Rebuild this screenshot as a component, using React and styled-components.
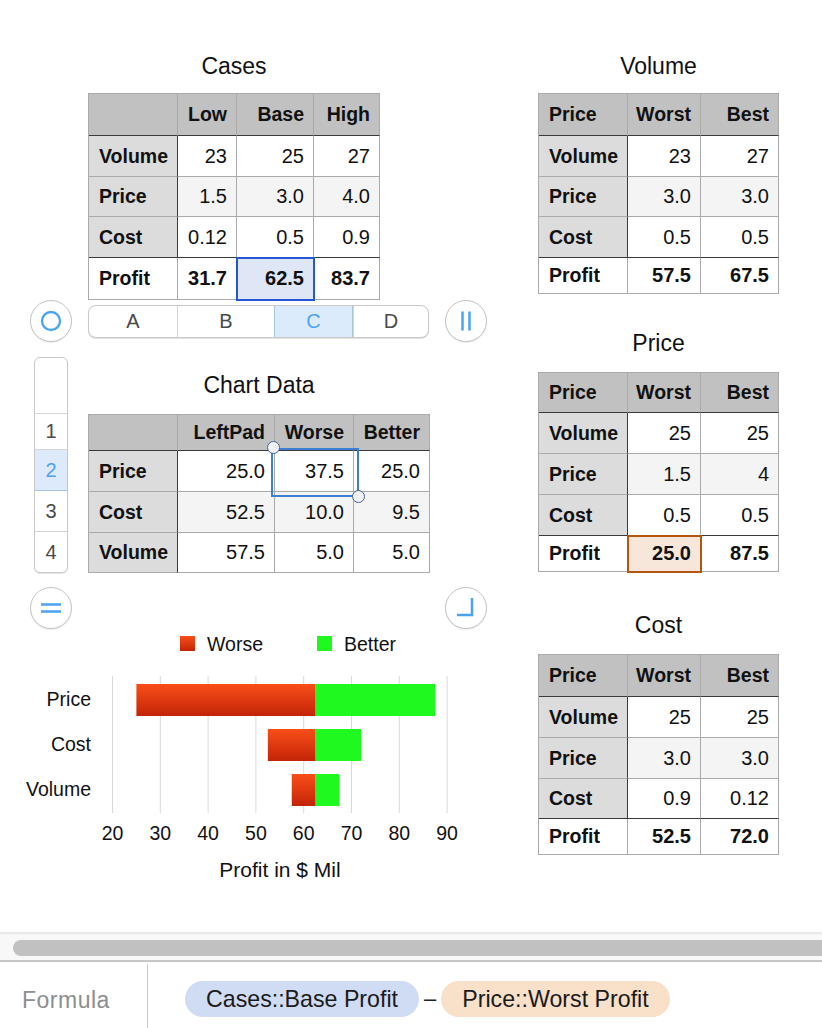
import React from 'react';
import styled, { createGlobalStyle, css } from 'styled-components';

const GlobalStyle = createGlobalStyle`
  html, body { margin: 0; padding: 0; background: #fff; }
  body {
    font-family: "Liberation Sans", Arial, Helvetica, sans-serif;
    color: #111;
  }
`;

const BLUE = '#4aa3f5';

const Page = styled.div`
  width: 822px;
  height: 1028px;
  display: flex;
  flex-direction: column;
  overflow: hidden;
  background: #fff;
`;

const Workspace = styled.div`
  flex: 0 0 932px;
  display: flex;
`;

const LeftPane = styled.div`
  width: 510px;
  flex: 0 0 510px;
  display: flex;
  flex-direction: column;
  padding-top: 52px;
  box-sizing: border-box;
`;

const RightPane = styled.div`
  flex: 1;
  display: flex;
  flex-direction: column;
  padding: 52px 0 0 28px;
`;

const GutterRow = styled.div`
  display: flex;
  align-items: ${p => p.$align || 'center'};
  gap: 16px;
  padding-left: 30px;
  margin-top: ${p => p.$mt || 0}px;
`;

const Gutter = styled.div`
  flex: 0 0 42px;
  width: 42px;
  display: flex;
  justify-content: center;
`;

const Content = styled.div`
  flex: 0 0 341px;
  width: 341px;
  display: flex;
  flex-direction: column;
  align-items: flex-start;
`;

const Block = styled.div`
  display: flex;
  flex-direction: column;
  align-self: flex-start;
  margin-top: ${p => p.$mt || 0}px;
`;

const Title = styled.div`
  font-size: 23px;
  line-height: 28px;
  text-align: center;
  color: #111;
  margin-bottom: ${p => p.$gap || 13}px;
`;

const Grid = styled.div`
  position: relative;
  display: grid;
  grid-template-columns: ${p => p.$cols};
  width: max-content;
  border-top: 1px solid #aaaaaa;
  border-left: 1px solid #aaaaaa;
`;

const selTones = {
  blue: { line: '#2456d6', fill: '#dfe6f6' },
  orange: { line: '#b3560f', fill: '#f7e6da' },
};

const Cell = styled.div`
  box-sizing: border-box;
  height: ${p => p.$h}px;
  display: flex;
  align-items: center;
  justify-content: ${p => (p.$left ? 'flex-start' : 'flex-end')};
  padding: ${p => (p.$left ? '0 0 0 10px' : '0 9px 0 0')};
  border-right: 1px solid ${p => (p.$darkRight ? '#3a3a3a' : '#aaaaaa')};
  border-bottom: 1px solid ${p => (p.$darkBottom ? '#3a3a3a' : '#aaaaaa')};
  background: ${p =>
    p.$kind === 'head'
      ? '#c1c1c1'
      : p.$kind === 'rowhead'
      ? '#dcdcdc'
      : p.$alt
      ? '#f4f4f4'
      : '#ffffff'};
  font-size: ${p => (p.$label ? '19.5px' : '20px')};
  font-weight: ${p => (p.$bold ? 700 : 400)};
  color: #111;
  white-space: nowrap;
  ${p =>
    p.$sel &&
    css`
      position: relative;
      z-index: 1;
      outline: 2px solid ${selTones[p.$sel].line};
      outline-offset: -1px;
      background: ${selTones[p.$sel].fill};
    `}
`;

const SelectionBox = styled.div`
  position: absolute;
  left: ${p => p.$x}px;
  top: ${p => p.$y}px;
  width: ${p => p.$w}px;
  height: ${p => p.$h}px;
  box-sizing: border-box;
  border: 2px solid #3c80d4;
  z-index: 2;
  pointer-events: none;
`;

const Handle = styled.div`
  position: absolute;
  left: ${p => p.$x - 6.5}px;
  top: ${p => p.$y - 6.5}px;
  width: 13px;
  height: 13px;
  box-sizing: border-box;
  border-radius: 50%;
  background: #f1f3f7;
  border: 1.5px solid #4a6394;
  z-index: 3;
`;

function SheetTable({ cols, header, rows, footer, heights, sel, children }) {
  const last = rows.length - 1;
  const isSel = (r, c) => sel && sel.row === r && sel.col === c;
  return (
    <Grid $cols={cols.map(c => `${c}px`).join(' ')}>
      {header.map((h, i) => (
        <Cell
          key={`h${i}`}
          $kind="head"
          $h={heights[0]}
          $left={i === 0}
          $darkBottom
          $bold
          $label
        >
          {h}
        </Cell>
      ))}
      {rows.map((r, ri) =>
        r.map((v, ci) => (
          <Cell
            key={`r${ri}c${ci}`}
            $kind={ci === 0 ? 'rowhead' : 'value'}
            $alt={ri === 1}
            $h={heights[ri + 1]}
            $left={ci === 0}
            $darkRight={ci === 0}
            $darkBottom={!!footer && ri === last}
            $bold={ci === 0}
            $label={ci === 0}
            $sel={isSel(ri, ci) ? sel.tone : undefined}
          >
            {v}
          </Cell>
        ))
      )}
      {footer &&
        footer.map((v, ci) => (
          <Cell
            key={`f${ci}`}
            $kind="foot"
            $h={heights[rows.length + 1]}
            $left={ci === 0}
            $bold
            $label={ci === 0}
            $sel={isSel('footer', ci) ? sel.tone : undefined}
          >
            {v}
          </Cell>
        ))}
      {children}
    </Grid>
  );
}

const CircleButton = styled.div`
  width: 42px;
  height: 42px;
  box-sizing: border-box;
  border-radius: 50%;
  border: 1.5px solid #c4c4c4;
  background: #fff;
  box-shadow: 0 1px 1px rgba(0, 0, 0, 0.08);
  display: flex;
  align-items: center;
  justify-content: center;
  flex: 0 0 42px;
`;

const IconSvg = styled.svg`
  width: 24px;
  height: 24px;
  fill: none;
  stroke: ${BLUE};
  stroke-width: 2.5;
`;

const RingIcon = () => (
  <IconSvg viewBox="0 0 24 24">
    <circle cx="12" cy="12" r="9" strokeWidth="2.3" />
  </IconSvg>
);
const PauseIcon = () => (
  <IconSvg viewBox="0 0 24 24">
    <path d="M8.5 2.5V21.5M15.5 2.5V21.5" />
  </IconSvg>
);
const EqualsIcon = () => (
  <IconSvg viewBox="0 0 24 24">
    <path d="M2 8.5H22M2 15.5H22" />
  </IconSvg>
);
const CornerIcon = () => (
  <IconSvg viewBox="0 0 24 24">
    <path d="M18 2V19H3" />
  </IconSvg>
);

const LetterBar = styled.div`
  display: flex;
  width: 341px;
  height: 33px;
  box-sizing: border-box;
  border: 1px solid #c8c8c8;
  border-radius: 8px;
  overflow: hidden;
  background: #fff;
  box-shadow: 0 1px 1px rgba(0, 0, 0, 0.12);
`;

const LetterSeg = styled.div`
  flex: ${p => (p.$w ? `0 0 ${p.$w}px` : '1')};
  box-sizing: border-box;
  display: flex;
  align-items: center;
  justify-content: center;
  font-size: 20px;
  color: ${p => (p.$active ? BLUE : '#4a4a4a')};
  background: ${p => (p.$active ? '#dcebfc' : 'transparent')};
  border-left: 1px solid ${p => (p.$active ? '#a9c4e2' : '#d4d4d4')};
  border-right: ${p => (p.$active ? '1px solid #a9c4e2' : 'none')};
  &:first-child {
    border-left: none;
  }
`;

const RowRail = styled.div`
  width: 34px;
  box-sizing: border-box;
  border: 1px solid #c9c9c9;
  border-radius: 6px;
  overflow: hidden;
  background: #fff;
  display: flex;
  flex-direction: column;
  box-shadow: 0 1px 1px rgba(0, 0, 0, 0.1);
`;

const RailCell = styled.div`
  height: ${p => p.$h}px;
  box-sizing: border-box;
  border-bottom: 1px solid ${p => (p.$active ? '#a9c4e2' : '#d6d6d6')};
  display: flex;
  align-items: center;
  justify-content: center;
  font-size: 20px;
  color: ${p => (p.$active ? BLUE : '#4a4a4a')};
  background: ${p => (p.$active ? '#dceafb' : 'transparent')};
  &:last-child {
    border-bottom: none;
  }
`;

const ChartSvg = styled.svg`
  display: block;
  text {
    font-family: "Liberation Sans", Arial, Helvetica, sans-serif;
    font-size: 19.5px;
    fill: #111;
  }
  .axis-title {
    font-size: 21px;
  }
`;

const ScrollTrack = styled.div`
  flex: 0 0 30px;
  box-sizing: border-box;
  border-top: 2px solid #e8e8e8;
  border-bottom: 2px solid #c8c8c8;
  background: #f8f8f8;
  padding: 6px 0 0 13px;
`;

const ScrollThumb = styled.div`
  height: 16px;
  background: #c1c1c1;
  border-radius: 8px 0 0 8px;
`;

const FormulaBar = styled.div`
  flex: 1;
  display: flex;
  background: #fff;
`;

const FormulaLabel = styled.div`
  flex: 0 0 148px;
  box-sizing: border-box;
  border-right: 1px solid #c8c8c8;
  display: flex;
  align-items: center;
  padding: 9px 0 0 22px;
  font-size: 23px;
  letter-spacing: 0.5px;
  color: #8e8e8e;
  margin-top: 2px;
`;

const FormulaBody = styled.div`
  flex: 1;
  display: flex;
  align-items: center;
  padding: 8px 0 0 37px;
`;

const Pill = styled.span`
  height: 36px;
  display: inline-flex;
  align-items: center;
  padding: 0 21px;
  border-radius: 18px;
  font-size: 23.2px;
  color: #1a1a1a;
  background: ${p => (p.$tone === 'orange' ? '#f8e0c9' : '#d0dcf3')};
`;

const Operator = styled.span`
  font-size: 22px;
  color: #222;
  padding: 0 5px;
`;

const casesData = {
  cols: [89, 59, 77, 66],
  header: ['', 'Low', 'Base', 'High'],
  rows: [
    ['Volume', '23', '25', '27'],
    ['Price', '1.5', '3.0', '4.0'],
    ['Cost', '0.12', '0.5', '0.9'],
  ],
  footer: ['Profit', '31.7', '62.5', '83.7'],
  heights: [42, 41, 40, 41, 42],
  sel: { row: 'footer', col: 2, tone: 'blue' },
};

const chartData = {
  cols: [89, 97, 79, 76],
  header: ['', 'LeftPad', 'Worse', 'Better'],
  rows: [
    ['Price', '25.0', '37.5', '25.0'],
    ['Cost', '52.5', '10.0', '9.5'],
    ['Volume', '57.5', '5.0', '5.0'],
  ],
  heights: [36, 41, 41, 40],
};

const sideTables = [
  {
    title: 'Volume',
    mt: 0,
    rows: [
      ['Volume', '23', '27'],
      ['Price', '3.0', '3.0'],
      ['Cost', '0.5', '0.5'],
    ],
    footer: ['Profit', '57.5', '67.5'],
    heights: [42, 41, 40, 41, 36],
    gap: 13,
  },
  {
    title: 'Price',
    mt: 35,
    rows: [
      ['Volume', '25', '25'],
      ['Price', '1.5', '4'],
      ['Cost', '0.5', '0.5'],
    ],
    footer: ['Profit', '25.0', '87.5'],
    heights: [40, 41, 41, 41, 36],
    gap: 15,
    sel: { row: 'footer', col: 1, tone: 'orange' },
  },
  {
    title: 'Cost',
    mt: 39,
    rows: [
      ['Volume', '25', '25'],
      ['Price', '3.0', '3.0'],
      ['Cost', '0.9', '0.12'],
    ],
    footer: ['Profit', '52.5', '72.0'],
    heights: [42, 41, 41, 40, 36],
    gap: 15,
  },
];

const xOf = v => 112.5 + (v - 20) * 4.78;
const ticks = [20, 30, 40, 50, 60, 70, 80, 90];
const bars = [
  { label: 'Price', y: 683, lo: 25, hi: 87.5 },
  { label: 'Cost', y: 728, lo: 52.5, hi: 72 },
  { label: 'Volume', y: 773, lo: 57.5, hi: 67.5 },
];
const BASE = 62.5;

function TornadoChart() {
  return (
    <ChartSvg width="480" height="257" viewBox="0 628 480 257">
      <defs>
        <linearGradient id="worseGrad" x1="0" y1="0" x2="0" y2="1">
          <stop offset="0" stopColor="#f94e19" />
          <stop offset="1" stopColor="#c32407" />
        </linearGradient>
      </defs>
      <rect x="180" y="635" width="15" height="15" fill="url(#worseGrad)" />
      <text x="207" y="650">Worse</text>
      <rect x="317" y="635" width="15" height="15" fill="#1ff91f" />
      <text x="344" y="650">Better</text>

      {ticks.map(t => (
        <line
          key={t}
          x1={xOf(t)}
          x2={xOf(t)}
          y1="675"
          y2="812"
          stroke="#d9d9d9"
          strokeWidth="1"
        />
      ))}
      {bars.map(b => (
        <g key={b.label}>
          <rect
            x={xOf(b.lo)}
            y={b.y}
            width={xOf(BASE) - xOf(b.lo)}
            height="32"
            fill="url(#worseGrad)"
          />
          <rect
            x={xOf(BASE)}
            y={b.y}
            width={xOf(b.hi) - xOf(BASE)}
            height="32"
            fill="#1ff91f"
          />
          <text x="91" y={b.y + 22} textAnchor="end">
            {b.label}
          </text>
        </g>
      ))}
      {ticks.map(t => (
        <text key={`l${t}`} x={xOf(t)} y="839" textAnchor="middle">
          {t}
        </text>
      ))}
      <text className="axis-title" x="280" y="876" textAnchor="middle">
        Profit in $ Mil
      </text>
    </ChartSvg>
  );
}

export default function App() {
  return (
    <Page>
      <GlobalStyle />
      <Workspace>
        <LeftPane>
          <GutterRow $align="flex-start">
            <Gutter />
            <Content>
              <Block>
                <Title>Cases</Title>
                <SheetTable {...casesData} />
              </Block>
            </Content>
          </GutterRow>

          <GutterRow>
            <Gutter>
              <CircleButton>
                <RingIcon />
              </CircleButton>
            </Gutter>
            <Content>
              <LetterBar>
                <LetterSeg $w={88}>A</LetterSeg>
                <LetterSeg $w={97}>B</LetterSeg>
                <LetterSeg $w={79} $active>
                  C
                </LetterSeg>
                <LetterSeg>D</LetterSeg>
              </LetterBar>
            </Content>
            <Gutter>
              <CircleButton>
                <PauseIcon />
              </CircleButton>
            </Gutter>
          </GutterRow>

          <GutterRow $align="flex-end" $mt={15}>
            <Gutter>
              <RowRail>
                <RailCell $h={56} />
                <RailCell $h={36}>1</RailCell>
                <RailCell $h={41} $active>
                  2
                </RailCell>
                <RailCell $h={41}>3</RailCell>
                <RailCell $h={40}>4</RailCell>
              </RowRail>
            </Gutter>
            <Content>
              <Block>
                <Title $gap={15}>Chart Data</Title>
                <SheetTable {...chartData}>
                  <SelectionBox $x={182} $y={33} $w={88} $h={49} />
                  <Handle $x={184} $y={32} />
                  <Handle $x={269} $y={81} />
                </SheetTable>
              </Block>
            </Content>
          </GutterRow>

          <GutterRow $mt={14}>
            <Gutter>
              <CircleButton>
                <EqualsIcon />
              </CircleButton>
            </Gutter>
            <Content />
            <Gutter>
              <CircleButton>
                <CornerIcon />
              </CircleButton>
            </Gutter>
          </GutterRow>

          <TornadoChart />
        </LeftPane>

        <RightPane>
          {sideTables.map(t => (
            <Block key={t.title} $mt={t.mt}>
              <Title $gap={t.gap}>{t.title}</Title>
              <SheetTable
                cols={[89, 73, 78]}
                header={['Price', 'Worst', 'Best']}
                rows={t.rows}
                footer={t.footer}
                heights={t.heights}
                sel={t.sel}
              />
            </Block>
          ))}
        </RightPane>
      </Workspace>

      <ScrollTrack>
        <ScrollThumb />
      </ScrollTrack>

      <FormulaBar>
        <FormulaLabel>Formula</FormulaLabel>
        <FormulaBody>
          <Pill>Cases::Base Profit</Pill>
          <Operator>–</Operator>
          <Pill $tone="orange">Price::Worst Profit</Pill>
        </FormulaBody>
      </FormulaBar>
    </Page>
  );
}
